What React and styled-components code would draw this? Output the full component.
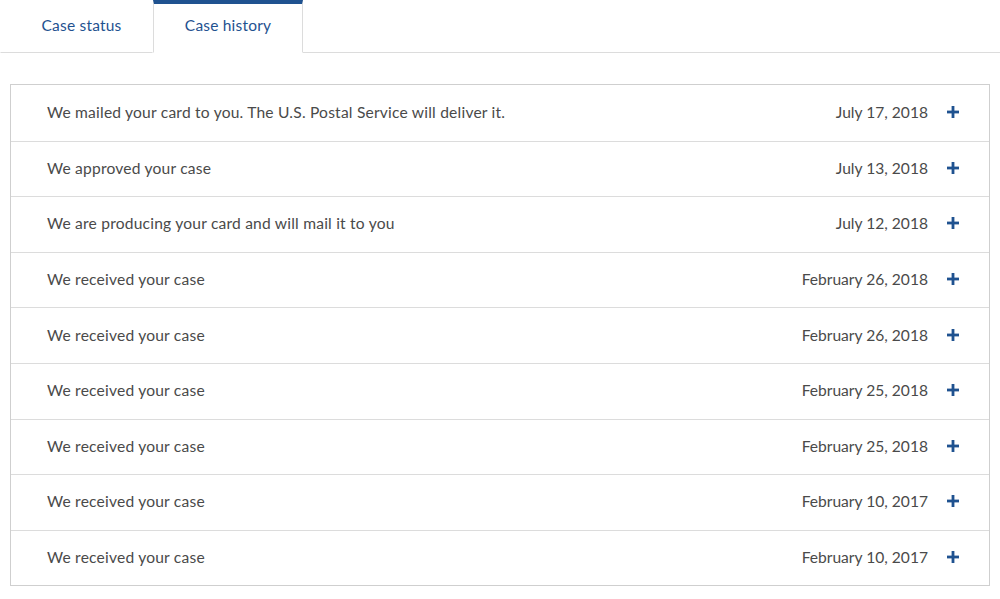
import React from 'react';
import styled, { createGlobalStyle } from 'styled-components';

const GlobalStyle = createGlobalStyle`
  html, body {
    margin: 0;
    padding: 0;
    background: #fff;
    font-family: Lato, "Open Sans", "Liberation Sans", sans-serif;
  }
`;

const blue = '#1f5290';

const history = [
  { text: 'We mailed your card to you. The U.S. Postal Service will deliver it.', date: 'July 17, 2018' },
  { text: 'We approved your case', date: 'July 13, 2018' },
  { text: 'We are producing your card and will mail it to you', date: 'July 12, 2018' },
  { text: 'We received your case', date: 'February 26, 2018' },
  { text: 'We received your case', date: 'February 26, 2018' },
  { text: 'We received your case', date: 'February 25, 2018' },
  { text: 'We received your case', date: 'February 25, 2018' },
  { text: 'We received your case', date: 'February 10, 2017' },
  { text: 'We received your case', date: 'February 10, 2017' },
];

const Page = styled.div`
  width: 1000px;
`;

const Tabs = styled.div`
  display: flex;
  height: 53px;
  border-bottom: 1px solid #dcdcdc;
  box-sizing: border-box;
`;

const Tab = styled.div`
  width: ${(p) => p.$width}px;
  height: 53px;
  margin-bottom: -1px;
  box-sizing: border-box;
  display: flex;
  align-items: center;
  justify-content: center;
  padding: 0 0 6px ${(p) => (p.$active ? 0 : 10)}px;
  font-size: 15.5px;
  letter-spacing: 0.2px;
  color: ${blue};
  background: #fff;
  border-top: 4px solid ${(p) => (p.$active ? blue : 'transparent')};
  border-left: 1px solid ${(p) => (p.$active ? '#dcdcdc' : 'transparent')};
  border-right: 1px solid ${(p) => (p.$active ? '#dcdcdc' : 'transparent')};
  border-bottom: 1px solid ${(p) => (p.$active ? '#fff' : '#dcdcdc')};
`;

const List = styled.div`
  margin: 31px 10px 0 10px;
  border: 1px solid #cfcfcf;
  box-sizing: border-box;
  width: 980px;
`;

const Row = styled.div`
  display: flex;
  align-items: center;
  height: 55.6px;
  box-sizing: border-box;
  padding: 0 30px 2px 36px;
  font-size: 15.6px;
  letter-spacing: 0.2px;
  color: #4a4a4a;
  & + & {
    border-top: 1px solid #dcdcdc;
  }
`;

const Text = styled.span`
  flex: 1;
`;

const DateText = styled.span`
  margin-right: 19px;
  letter-spacing: 0;
`;

const Plus = () => (
  <svg width="12" height="12" viewBox="0 0 12 12">
    <rect x="4.6" y="0" width="2.8" height="12" fill={blue} />
    <rect x="0" y="4.6" width="12" height="2.8" fill={blue} />
  </svg>
);

export default function App() {
  return (
    <Page>
      <GlobalStyle />
      <Tabs>
        <Tab $width={153}>Case status</Tab>
        <Tab $width={150} $active>Case history</Tab>
      </Tabs>
      <List>
        {history.map((h, i) => (
          <Row key={i}>
            <Text>{h.text}</Text>
            <DateText>{h.date}</DateText>
            <Plus />
          </Row>
        ))}
      </List>
    </Page>
  );
}
